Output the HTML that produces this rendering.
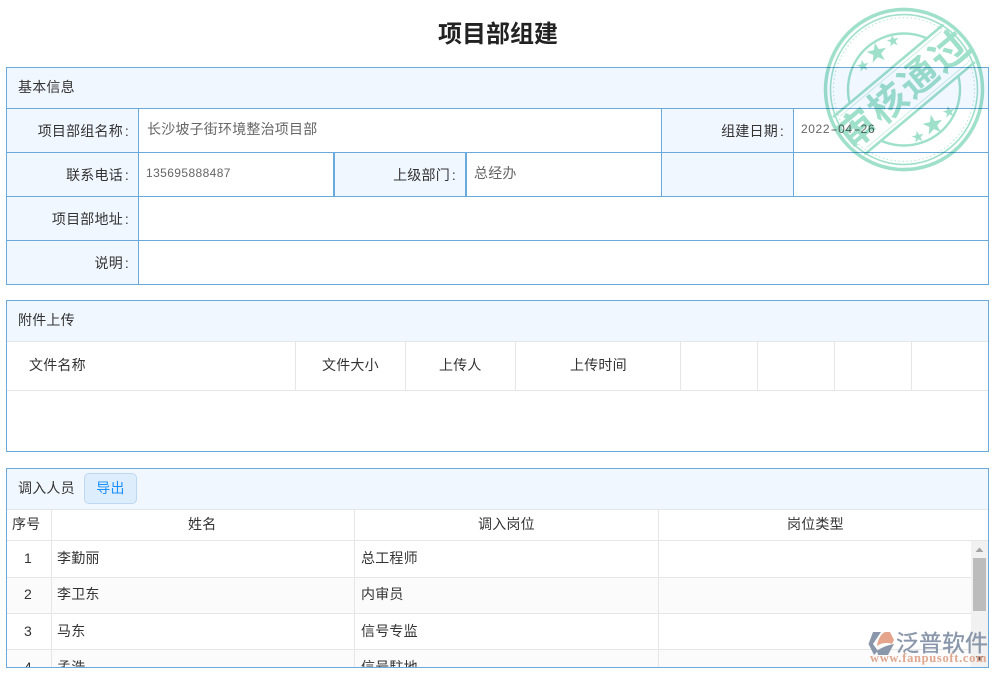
<!DOCTYPE html>
<html lang="zh">
<head>
<meta charset="utf-8">
<title>项目部组建</title>
<style>
html,body{margin:0;padding:0;background:#fff;}
body{width:998px;height:676px;position:relative;overflow:hidden;font-family:"Liberation Sans","Noto Sans CJK SC",sans-serif;font-size:14px;color:#333;letter-spacing:.2px;}
.a{position:absolute;}
.t{position:absolute;white-space:nowrap;line-height:20px;height:20px;}
.l{background:#6aa9dc;position:absolute;}
.g{background:#e6e6e6;position:absolute;}
.bg{background:#f1f7ff;position:absolute;}
.v{color:#666;}
.lab{color:#333;text-align:right;}
.lab i{font-style:normal;margin-left:2px;}
.h{display:inline-block;width:8px;text-align:center;transform:scaleX(1.7);letter-spacing:0;}
</style>
</head>
<body>
<div class="t" style="left:398px;top:21px;width:200px;height:26px;line-height:27px;font-size:24px;font-weight:bold;text-align:center;color:#222;letter-spacing:0;">项目部组建</div>

<!-- panel 1 -->
<div class="a" style="left:6px;top:67px;width:981px;height:216px;border:1px solid #6aa9dc;"></div>
<div class="bg" style="left:7px;top:68px;width:981px;height:40px;"></div>
<div class="bg" style="left:7px;top:109px;width:131px;height:175px;"></div>
<div class="bg" style="left:335px;top:153px;width:130px;height:43px;"></div>
<div class="bg" style="left:662px;top:109px;width:131px;height:87px;"></div>
<div class="l" style="left:7px;top:108px;width:981px;height:1px;"></div>
<div class="l" style="left:7px;top:152px;width:981px;height:1px;"></div>
<div class="l" style="left:7px;top:196px;width:981px;height:1px;"></div>
<div class="l" style="left:7px;top:240px;width:981px;height:1px;"></div>
<div class="l" style="left:138px;top:109px;width:1px;height:175px;"></div>
<div class="l" style="left:333px;top:153px;width:2px;height:43px;"></div>
<div class="l" style="left:465px;top:153px;width:2px;height:43px;"></div>
<div class="l" style="left:661px;top:109px;width:1px;height:87px;"></div>
<div class="l" style="left:793px;top:109px;width:1px;height:87px;"></div>
<div class="t" style="left:18px;top:77px;">基本信息</div>
<div class="t lab" style="left:9px;top:121px;width:120px;">项目部组名称<i>:</i></div>
<div class="t v" style="left:147px;top:119px;">长沙坡子街环境整治项目部</div>
<div class="t lab" style="left:664px;top:121px;width:120px;">组建日期<i>:</i></div>
<div class="t v" style="left:801px;top:119px;font-size:12px;letter-spacing:.6px;">2022<span class="h">-</span>04<span class="h">-</span>26</div>
<div class="t lab" style="left:9px;top:165px;width:120px;">联系电话<i>:</i></div>
<div class="t v" style="left:146px;top:163px;font-size:12px;letter-spacing:.4px;">135695888487</div>
<div class="t lab" style="left:336px;top:165px;width:120px;">上级部门<i>:</i></div>
<div class="t v" style="left:474px;top:163px;">总经办</div>
<div class="t lab" style="left:9px;top:209px;width:120px;">项目部地址<i>:</i></div>
<div class="t lab" style="left:9px;top:253px;width:120px;">说明<i>:</i></div>

<!-- panel 2 -->
<div class="a" style="left:6px;top:300px;width:981px;height:150px;border:1px solid #6aa9dc;"></div>
<div class="bg" style="left:7px;top:301px;width:981px;height:40px;"></div>
<div class="g" style="left:7px;top:341px;width:981px;height:1px;"></div>
<div class="g" style="left:7px;top:390px;width:981px;height:1px;"></div>
<div class="g" style="left:295px;top:342px;width:1px;height:48px;"></div>
<div class="g" style="left:405px;top:342px;width:1px;height:48px;"></div>
<div class="g" style="left:515px;top:342px;width:1px;height:48px;"></div>
<div class="g" style="left:680px;top:342px;width:1px;height:48px;"></div>
<div class="g" style="left:757px;top:342px;width:1px;height:48px;"></div>
<div class="g" style="left:834px;top:342px;width:1px;height:48px;"></div>
<div class="g" style="left:911px;top:342px;width:1px;height:48px;"></div>
<div class="t" style="left:18px;top:310px;">附件上传</div>
<div class="t" style="left:29px;top:355px;">文件名称</div>
<div class="t" style="left:322px;top:355px;">文件大小</div>
<div class="t" style="left:439px;top:355px;">上传人</div>
<div class="t" style="left:570px;top:355px;">上传时间</div>

<!-- panel 3 -->
<div class="a" style="left:6px;top:468px;width:981px;height:198px;border:1px solid #6aa9dc;"></div>
<div class="bg" style="left:7px;top:469px;width:981px;height:40px;"></div>
<div class="t" style="left:18px;top:478px;">调入人员</div>
<div class="a" style="left:84px;top:473px;width:51px;height:29px;background:#deedfc;border:1px solid #bcd8f3;border-radius:5px;color:#1890ff;text-align:center;line-height:29px;">导出</div>
<div class="g" style="left:7px;top:509px;width:981px;height:1px;"></div>
<div class="a" style="left:7px;top:578px;width:964px;height:35px;background:#fbfbfb;"></div>
<div class="a" style="left:7px;top:650px;width:964px;height:17px;background:#fbfbfb;"></div>
<div class="g" style="left:7px;top:540px;width:981px;height:1px;"></div>
<div class="g" style="left:7px;top:577px;width:964px;height:1px;"></div>
<div class="g" style="left:7px;top:613px;width:964px;height:1px;"></div>
<div class="g" style="left:7px;top:649px;width:964px;height:1px;"></div>
<div class="g" style="left:51px;top:510px;width:1px;height:157px;"></div>
<div class="g" style="left:354px;top:510px;width:1px;height:157px;"></div>
<div class="g" style="left:658px;top:510px;width:1px;height:157px;"></div>
<div class="t" style="left:12px;top:514px;">序号</div>
<div class="t" style="left:188px;top:514px;">姓名</div>
<div class="t" style="left:478px;top:514px;">调入岗位</div>
<div class="t" style="left:787px;top:514px;">岗位类型</div>

<div class="t" style="left:24px;top:548px;">1</div>
<div class="t" style="left:57px;top:548px;">李勤丽</div>
<div class="t" style="left:361px;top:548px;">总工程师</div>
<div class="t" style="left:24px;top:584px;">2</div>
<div class="t" style="left:57px;top:584px;">李卫东</div>
<div class="t" style="left:361px;top:584px;">内审员</div>
<div class="t" style="left:24px;top:621px;">3</div>
<div class="t" style="left:57px;top:621px;">马东</div>
<div class="t" style="left:361px;top:621px;">信号专监</div>
<div class="a" style="left:7px;top:650px;width:964px;height:17px;overflow:hidden;">
  <div class="t" style="left:17px;top:7px;">4</div>
  <div class="t" style="left:50px;top:7px;">孟浩</div>
  <div class="t" style="left:354px;top:7px;">信号駐地</div>
</div>

<!-- scrollbar -->
<div class="a" style="left:971px;top:541px;width:17px;height:126px;background:#f1f1f1;"></div>
<div class="a" style="left:973px;top:558px;width:13px;height:53px;background:#bcbcbc;"></div>
<svg class="a" style="left:971px;top:541px;" width="17" height="126">
  <path d="M4.5 11 L12.5 11 L8.5 6.5 Z" fill="#a3a3a3"/>
  <path d="M4.5 115 L12.5 115 L8.5 120 Z" fill="#505050"/>
</svg>

<!-- stamp -->
<svg class="a" style="left:810px;top:0;mix-blend-mode:multiply;" width="188" height="180" viewBox="0 0 188 180">
  <defs>
    <clipPath id="c"><path d="M-100 -100H100V-25H-100Z M-100 25H100V100H-100Z"/></clipPath>
  </defs>
  <g transform="translate(94 89.5) rotate(-40)" fill="none" stroke="#9fe0ca">
    <g transform="rotate(40) scale(1 1.02) rotate(-40)">
      <circle r="78.5" stroke-width="3.5"/>
      <circle r="73.5" stroke-width="1.6"/>
      <circle r="70.5" stroke-width="1.2" stroke-dasharray="1.4 2.6" opacity=".7"/>
    </g>
    <circle r="56" stroke-width="2.4" clip-path="url(#c)"/>
    <path d="M-72 -24.5 L72 -24.5 M-72 24.5 L72 24.5" stroke-width="2.6"/>
    <path d="M-66 -20.5 L66 -20.5 M-66 20.5 L66 20.5" stroke-width="1" opacity=".5"/>
  </g>
  <g fill="#9fe0ca">
    <path transform="translate(67 53) rotate(-12) scale(10.5)" d="M0 -1 L.24 -.33 L.95 -.31 L.38 .12 L.59 .81 L0 .4 L-.59 .81 L-.38 .12 L-.95 -.31 L-.24 -.33 Z"/>
    <path transform="translate(83 41) rotate(-12) scale(6.2)" d="M0 -1 L.24 -.33 L.95 -.31 L.38 .12 L.59 .81 L0 .4 L-.59 .81 L-.38 .12 L-.95 -.31 L-.24 -.33 Z"/>
    <path transform="translate(53 66) rotate(-12) scale(6.2)" d="M0 -1 L.24 -.33 L.95 -.31 L.38 .12 L.59 .81 L0 .4 L-.59 .81 L-.38 .12 L-.95 -.31 L-.24 -.33 Z"/>
    <path transform="translate(123 125) rotate(-12) scale(10.5)" d="M0 -1 L.24 -.33 L.95 -.31 L.38 .12 L.59 .81 L0 .4 L-.59 .81 L-.38 .12 L-.95 -.31 L-.24 -.33 Z"/>
    <path transform="translate(108 137) rotate(-12) scale(6.2)" d="M0 -1 L.24 -.33 L.95 -.31 L.38 .12 L.59 .81 L0 .4 L-.59 .81 L-.38 .12 L-.95 -.31 L-.24 -.33 Z"/>
    <path transform="translate(139 112) rotate(-12) scale(6.2)" d="M0 -1 L.24 -.33 L.95 -.31 L.38 .12 L.59 .81 L0 .4 L-.59 .81 L-.38 .12 L-.95 -.31 L-.24 -.33 Z"/>
  </g>
  <text transform="translate(94 89.5) rotate(-40)" text-anchor="middle" y="13.5" font-size="38" font-weight="bold" letter-spacing="2" fill="#9fe0ca" font-family="'Liberation Sans','Noto Sans CJK SC',sans-serif">审核通过</text>
</svg>

<!-- logo -->
<svg class="a" style="left:866px;top:628px;" width="30" height="30" viewBox="0 0 30 30">
  <path d="M7 4 L15 4 L11 10 L7 16 L12 23 L8 27 L2.5 16 Z" fill="#8a97ab"/>
  <path d="M11 18 C12 11 15 6 19 4 L24 4 L28 12 L26 16 C21 14 15 15 11 18 Z" fill="#e4a58c"/>
  <path d="M28 16 L22 27 L12 27 L11 23 C16 19 22 17 28 16 Z" fill="#8a97ab"/>
</svg>
<div class="t" style="left:896px;top:629px;height:28px;line-height:28px;font-size:23px;color:#8a97ab;letter-spacing:0;-webkit-text-stroke:.35px #8a97ab;">泛普软件</div>
<div class="t" style="left:870px;top:651px;height:14px;line-height:14px;font-family:'Liberation Serif',serif;font-size:12.5px;font-weight:bold;color:#e0a78f;letter-spacing:.68px;">www.fanpusoft.com</div>
</body>
</html>
